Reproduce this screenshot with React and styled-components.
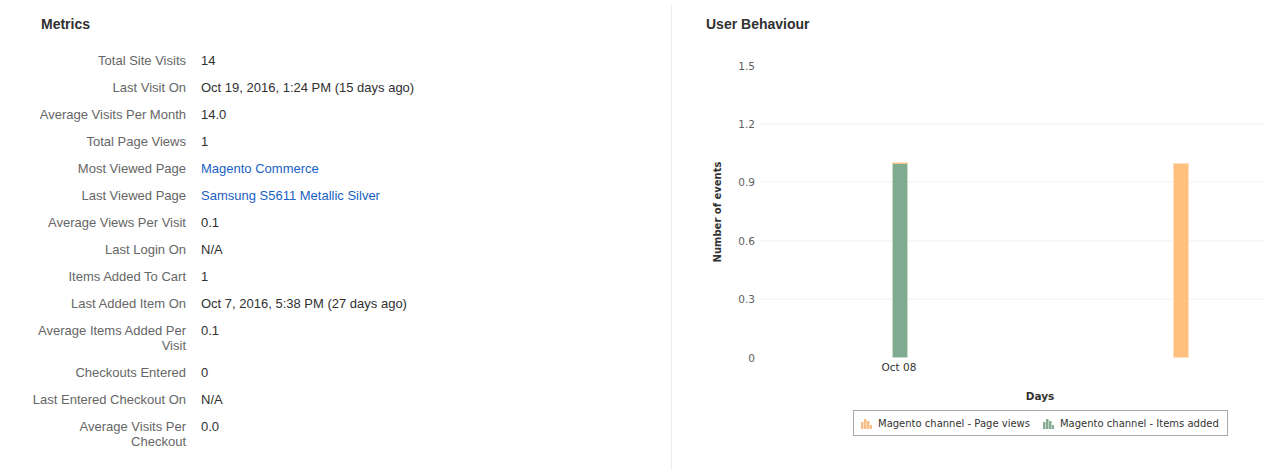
import styled, { createGlobalStyle } from "styled-components";

const GlobalStyle = createGlobalStyle`
  body {
    margin: 0;
    background: #fff;
    font-family: "Liberation Sans", Arial, sans-serif;
  }
`;

const Page = styled.div`
  display: flex;
  width: 1264px;
  height: 470px;
  padding-top: 5px;
  box-sizing: border-box;
  overflow: hidden;
`;

const Column = styled.section`
  box-sizing: border-box;
  width: ${(p) => p.width}px;
  padding-left: ${(p) => p.pad}px;
  border-left: ${(p) => (p.divided ? "1px solid #eeeeee" : "none")};
`;

const Heading = styled.h2`
  margin: 10px 0 0;
  font-size: 14px;
  line-height: 18px;
  font-weight: 700;
  color: #303030;
`;

const MetricsTable = styled.dl`
  display: grid;
  grid-template-columns: 160px 1fr;
  column-gap: 15px;
  margin: 13.5px 0 0 -15px;
  font-size: 13px;
  line-height: 15px;
`;

const Label = styled.dt`
  text-align: right;
  color: #666666;
  padding: 6px 0;
`;

const Value = styled.dd`
  margin: 0;
  color: #303030;
  padding: 6px 0;
`;

const Link = styled.a`
  color: #1a5fc4;
  text-decoration: none;
`;

const ChartBox = styled.div`
  margin-top: 17px;
  margin-left: -34px;
`;

const Legend = styled.div`
  display: inline-flex;
  align-items: center;
  gap: 13px;
  margin: 1px 0 0 181px;
  height: 24px;
  padding: 0 8px 0 7px;
  border: 1px solid #a8a8a8;
  font-family: Verdana, "DejaVu Sans", sans-serif;
  font-size: 10px;
  color: #333333;
`;

const LegendItem = styled.span`
  display: flex;
  align-items: center;
  gap: 6px;
`;

const metrics = [
  ["Total Site Visits", "14"],
  ["Last Visit On", "Oct 19, 2016, 1:24 PM (15 days ago)"],
  ["Average Visits Per Month", "14.0"],
  ["Total Page Views", "1"],
  ["Most Viewed Page", "Magento Commerce", true],
  ["Last Viewed Page", "Samsung S5611 Metallic Silver", true],
  ["Average Views Per Visit", "0.1"],
  ["Last Login On", "N/A"],
  ["Items Added To Cart", "1"],
  ["Last Added Item On", "Oct 7, 2016, 5:38 PM (27 days ago)"],
  ["Average Items Added Per Visit", "0.1"],
  ["Checkouts Entered", "0"],
  ["Last Entered Checkout On", "N/A"],
  ["Average Visits Per Checkout", "0.0"],
];

const ticks = [
  ["1.5", 16],
  ["1.2", 74],
  ["0.9", 132],
  ["0.6", 191],
  ["0.3", 249],
  ["0", 308],
];

function BarsIcon({ color }) {
  return (
    <svg width="11" height="11" viewBox="0 0 11 11">
      <rect x="0" y="4" width="2.5" height="7" fill={color} />
      <rect x="3" y="1" width="2.5" height="10" fill={color} />
      <rect x="6" y="3" width="2.5" height="8" fill={color} />
      <rect x="9" y="7" width="2" height="4" fill={color} />
    </svg>
  );
}

function BehaviourChart() {
  const axisFont = 'Verdana, "DejaVu Sans", sans-serif';
  return (
    <svg width="592" height="355" viewBox="0 0 592 355">
      {ticks.slice(1, 5).map(([, y]) => (
        <line key={y} x1="88" x2="592" y1={y} y2={y} stroke="#f0f0f0" />
      ))}
      {ticks.map(([t, y]) => (
        <text
          key={t}
          x="83"
          y={y + 4}
          textAnchor="end"
          fontFamily={axisFont}
          fontSize="10.5"
          fill="#606060"
        >
          {t}
        </text>
      ))}
      <text
        transform="translate(49 162) rotate(-90)"
        textAnchor="middle"
        fontFamily={axisFont}
        fontSize="10"
        fontWeight="700"
        fill="#333333"
      >
        Number of events
      </text>
      <rect x="220.5" y="113.5" width="15" height="194" fill="#7fac90" stroke="#c8dccf" />
      <rect x="220" y="112.5" width="16" height="1.5" fill="#ffc78f" />
      <rect x="501.5" y="113.5" width="15" height="194" fill="#ffbf7e" stroke="#ffe0c0" />
      <text
        x="227"
        y="321"
        textAnchor="middle"
        fontFamily={axisFont}
        fontSize="10.5"
        fill="#333333"
      >
        Oct 08
      </text>
      <text
        x="368"
        y="350"
        textAnchor="middle"
        fontFamily={axisFont}
        fontSize="10.5"
        fontWeight="700"
        fill="#333333"
      >
        Days
      </text>
    </svg>
  );
}

export default function App() {
  return (
    <>
      <GlobalStyle />
      <Page>
        <Column width={671} pad={41}>
          <Heading>Metrics</Heading>
          <MetricsTable>
            {metrics.map(([label, value, link]) => (
              <>
                <Label key={label}>{label}</Label>
                <Value key={label + "-v"}>
                  {link ? <Link href="#">{value}</Link> : value}
                </Value>
              </>
            ))}
          </MetricsTable>
        </Column>
        <Column width={593} pad={34} divided>
          <Heading>User Behaviour</Heading>
          <ChartBox>
            <BehaviourChart />
            <Legend>
              <LegendItem>
                <BarsIcon color="#f7bd86" />
                Magento channel - Page views
              </LegendItem>
              <LegendItem>
                <BarsIcon color="#86ab93" />
                Magento channel - Items added
              </LegendItem>
            </Legend>
          </ChartBox>
        </Column>
      </Page>
    </>
  );
}
